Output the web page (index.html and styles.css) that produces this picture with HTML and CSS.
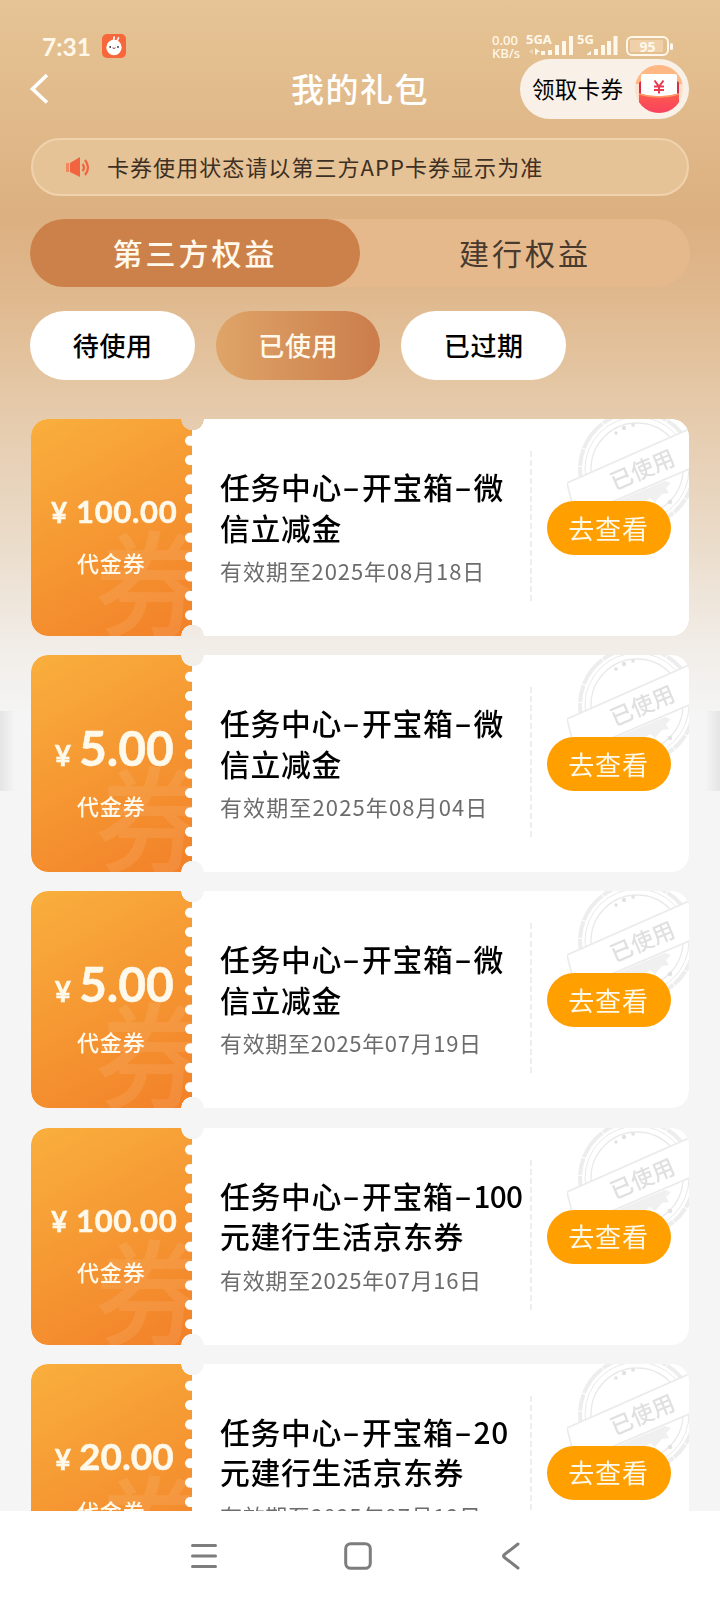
FILE: index.html
```html
<!DOCTYPE html>
<html lang="zh-CN">
<head>
<meta charset="utf-8">
<title>我的礼包</title>
<link rel="stylesheet" href="styles.css">
</head>
<body>
<svg class="defs" width="0" height="0" aria-hidden="true">
  <symbol id="stamp" viewBox="0 0 122 110">
    <g fill="none" stroke="#e9e9e9">
      <circle cx="70" cy="50" r="57" stroke-width="4" stroke-dasharray="31 1 17 1" opacity=".8"/>
      <circle cx="70" cy="50" r="52" stroke-width="1"/>
      <circle cx="70" cy="50" r="46" stroke-width="1.300"/>
    </g>
    <g fill="#e2e2e2"><circle cx="49" cy="14" r="1.800"/><circle cx="57" cy="9" r="2.200"/><circle cx="66" cy="6" r="1.800"/><circle cx="103" cy="83" r="2.200"/></g>
    <path d="M0 64L122 10v40L6 100z" fill="#fff"/>
    <path d="M0 64L122 10M40 85L122 50M0 64l6 24" fill="none" stroke="#ebebeb" stroke-width="1.700"/>
    <path d="M50 82L98 62l6 2-5 5 3 5-7 1-7 8-5-4-9 6-8-2-10 4z" fill="#f0f0f0"/>
  </symbol>
</svg>
<div class="screen">
  <header class="status">
    <span class="time">7:31</span>
    <svg class="app" width="26" height="26" viewBox="0 0 26 26"><rect x="1" y="1" width="24" height="24" rx="5" fill="#f8673b"/><path d="M12.500 7.500L13.200 4M16 8L17.500 4.800" stroke="#fff" stroke-width="1.700" stroke-linecap="round"/><circle cx="13" cy="14.500" r="7.700" fill="#fff"/><circle cx="9.200" cy="14" r=".9" fill="#333"/><circle cx="17" cy="14" r=".9" fill="#333"/><path d="M11.500 14.800q1.500 1.600 3 0" fill="#f55" stroke="#633" stroke-width=".7"/></svg>
    <span class="speed"><span>0.00</span><span>KB/s</span></span>
    <span class="net nga"><b>5GA</b>
      <svg width="48" height="24" viewBox="0 0 48 24"><path d="M5 15.500v6l-4-3z" opacity=".4"/><path d="M7 15l5 3.500-3 1v2H7zM13 18h4v4h-4zM20 17h4v5h-4zM27 12h4v10h-4zM34 8h4v14h-4zM41 3h4v19h-4z"/></svg></span>
    <span class="net ng"><b>5G</b>
      <svg width="48" height="24" viewBox="0 0 48 24"><path d="M10 21l4-3v4h-4zM17 16h4v6h-4zM24 12h4v10h-4zM30 8h4v14h-4zM36.500 3h4v19h-4z"/></svg></span>
    <span class="battery">95</span>
  </header>
  <div class="titlebar">
    <svg class="back" width="20" height="32" viewBox="0 0 20 32"><path d="M18 2L3.500 16 18 29.500" fill="none" stroke="#fff" stroke-width="3.600"/></svg>
    <h1>我的礼包</h1>
    <a class="claim"><span>领取卡券</span>
      <svg width="50" height="50" viewBox="0 0 50 50"><defs><clipPath id="c"><circle cx="25" cy="25" r="24"/></clipPath><linearGradient id="r" x2="0" y2="1"><stop stop-color="#fb5c4d"/><stop offset="1" stop-color="#fa3f60"/></linearGradient></defs><g clip-path="url(#c)"><rect width="50" height="50" fill="#ffe0cc"/><path d="M0 0h50v20H0z" fill="#ffb783"/><rect x="5" y="17" width="40" height="17" rx="3" fill="#d92e41"/><path d="M5 30q20 6 40 0v9q-4 11-20 11T5 39z" fill="url(#r)"/><path d="M9 10h32q2 0 2 2v18q-18 5-36 0V12q0-2 2-2z" fill="#fff"/><path d="M5 30q20 6 40 0" fill="none" stroke="#ff9a67" stroke-width="1.500"/><path d="M20.500 16.500l4.500 6 4.500-6M25 22v7.500M20 22.500h10M20 26h10" fill="none" stroke="#e93950" stroke-width="2"/></g></svg>
    </a>
  </div>
  <div class="notice">
    <svg width="26" height="24" viewBox="0 0 26 24"><path d="M0 8h3v9H0z" fill="#f7875b"/><path d="M4 8l10-6v20L4 17z" fill="#f26440"/><path d="M16.500 9q3 3.500 0 7M19 5q6 7.500 0 15" fill="none" stroke="#f26440" stroke-width="2.200"/></svg>
    <span>卡券使用状态请以第三方APP卡券显示为准</span>
  </div>
  <nav class="tabs"><a class="tab active"><span>第三方权益</span></a><a class="tab"><span>建行权益</span></a></nav>
  <nav class="filters"><a><span>待使用</span></a><a class="active"><span>已使用</span></a><a><span>已过期</span></a></nav>
  <main class="list">
    <article class="card">
      <div class="value"><p class="price hundred"><i>¥</i>100.00</p><p class="kind">代金券</p><span class="mark">券</span></div>
      <div class="info"><h2>任务中心<b>-</b>开宝箱<b>-</b>微<br>信立减金</h2><p>有效期至2025年08月18日</p></div>
      <div class="action"><svg class="stamp"><use href="#stamp"/></svg><span class="used">已使用</span><a>去查看</a></div>
    </article>
    <article class="card">
      <div class="value"><p class="price five"><i>¥</i>5.00</p><p class="kind">代金券</p><span class="mark">券</span></div>
      <div class="info"><h2>任务中心<b>-</b>开宝箱<b>-</b>微<br>信立减金</h2><p class="wide">有效期至2025年08月04日</p></div>
      <div class="action"><svg class="stamp"><use href="#stamp"/></svg><span class="used">已使用</span><a>去查看</a></div>
    </article>
    <article class="card">
      <div class="value"><p class="price five"><i>¥</i>5.00</p><p class="kind">代金券</p><span class="mark">券</span></div>
      <div class="info"><h2>任务中心<b>-</b>开宝箱<b>-</b>微<br>信立减金</h2><p class="narrow">有效期至2025年07月19日</p></div>
      <div class="action"><svg class="stamp"><use href="#stamp"/></svg><span class="used">已使用</span><a>去查看</a></div>
    </article>
    <article class="card">
      <div class="value"><p class="price hundred"><i>¥</i>100.00</p><p class="kind">代金券</p><span class="mark">券</span></div>
      <div class="info"><h2>任务中心<b>-</b>开宝箱<b>-</b><em>100</em><br>元建行生活京东券</h2><p class="narrow">有效期至2025年07月16日</p></div>
      <div class="action"><svg class="stamp"><use href="#stamp"/></svg><span class="used">已使用</span><a>去查看</a></div>
    </article>
    <article class="card">
      <div class="value"><p class="price twenty"><i>¥</i>20.00</p><p class="kind">代金券</p><span class="mark">券</span></div>
      <div class="info"><h2>任务中心<b>-</b>开宝箱<b>-</b>20<br>元建行生活京东券</h2><p class="narrow">有效期至2025年07月12日</p></div>
      <div class="action"><svg class="stamp"><use href="#stamp"/></svg><span class="used">已使用</span><a>去查看</a></div>
    </article>
  </main>
  <footer class="sysnav">
    <svg width="28" height="28" viewBox="0 0 28 28"><path d="M2.500 3.500h23M2.500 14h23M2.500 24.500h23"/></svg>
    <svg width="28" height="28" viewBox="0 0 28 28"><rect x="1.700" y="1.700" width="24.600" height="24.600" rx="5"/></svg>
    <svg width="28" height="28" viewBox="0 0 28 28"><path d="M20 2L6.500 12.500q-2 1.500 0 3L20 26"/></svg>
  </footer>
</div>
</body>
</html>
```
FILE: styles.css
```css
* { box-sizing: border-box; }
body { margin: 0; font-family: "Noto Sans CJK SC", sans-serif; color: #000; }
h1, h2, p { margin: 0; font-weight: 400; }
.defs { position: absolute; }
.screen {
  width: 720px; height: 1600px; overflow: hidden;
  display: flex; flex-direction: column;
  background:
    linear-gradient(90deg, #e5e5e5, #f5f5f500) 0 711px / 15px 80px no-repeat,
    linear-gradient(270deg, #e5e5e5, #f5f5f500) 705px 711px / 15px 80px no-repeat,
    linear-gradient(#e6c495 0, #dcb081 218px, #e0b98f 300px, #e5c9a8 400px, #eadac7 530px, #f1ece6 640px, #f5f5f5 715px);
}
.status { height: 59px; flex: none; display: flex; align-items: flex-start; padding: 33px 0 0 42px; color: #fff8ea; }
.time { font: 700 24.500px/27px Lato, sans-serif; width: 59px; flex: none; }
.app { flex: none; margin-right: 365px; }
.speed { display: flex; flex: none; flex-direction: column; width: 34px; font: 500 13px/13px "Noto Sans", sans-serif; padding-top: 1px; white-space: nowrap; }
.net { flex: none; display: flex; flex-direction: column; height: 26px; }
.net b { font: 700 13px/13px "Noto Sans", sans-serif; height: 13px; white-space: nowrap; }
.net svg { flex: none; margin-top: -13px; fill: #fff8ea; }
.nga { width: 51px; }
.nga svg { margin-left: 2px; }
.ng { width: 49px; }
.battery { flex: none; position: relative; width: 43px; height: 20px; margin-top: 3px; border: 2px solid #fff8ea; border-radius: 6px; background: linear-gradient(#efd0a9, #efd0a9) 2px 2px / 33px 12px no-repeat; font: 700 14px/17px "Noto Sans", sans-serif; text-align: center; }
.battery::after { content: ""; position: absolute; right: -6px; top: 5px; width: 3px; height: 7px; border-radius: 2px; background: #fff8ea; }
.titlebar { height: 60px; flex: none; display: grid; grid-template-columns: 200px 320px 200px; align-items: center; }
.back { margin-left: 29px; }
.titlebar h1 { text-align: center; font-weight: 500; font-size: 33px; line-height: 44px; letter-spacing: 1.500px; color: #fff; padding-bottom: 2px; }
.claim { justify-self: end; margin-right: 31px; width: 169px; height: 60px; border-radius: 30px; background: #f9f1e8; display: flex; align-items: center; justify-content: space-between; padding: 0 5px 0 12px; font-size: 22.500px; white-space: nowrap; letter-spacing: .3px; }
.claim span { padding-bottom: 2px; }
.notice { flex: none; margin: 19px 31px 0; height: 58px; border: 2px solid #f0d3ac; border-radius: 29px; background: #e6c297; display: flex; align-items: center; padding-left: 33px; font-size: 22px; letter-spacing: 1.050px; color: #3d3023; }
.notice svg { margin-right: 15px; }
.notice span { padding-bottom: 2px; }
.tabs { flex: none; margin: 23px 30px 0; height: 68px; border-radius: 34px; background: #e5b98c; display: flex; }
.tab { flex: 1; display: flex; align-items: center; justify-content: center; font-size: 30px; letter-spacing: 3px; color: #483a2c; border-radius: 34px; }
.tab span, .filters span { padding-bottom: 2px; }
.tab.active { background: #cd814a; color: #fff9ec; font-weight: 500; }
.filters { flex: none; margin: 24px 30px 0; display: flex; gap: 21px; }
.filters a { width: 164.500px; height: 69px; border-radius: 35px; background: #fff; display: flex; align-items: center; justify-content: center; font-size: 26px; font-weight: 500; letter-spacing: .6px; padding-left: 1px; }
.filters a.active { background: linear-gradient(90deg, #dfa468, #cb7d4b); color: #fff9ec; }
.list { flex: 1; min-height: 0; overflow: hidden; margin: 39px 31px 0 30.500px; display: flex; flex-direction: column; gap: 19.200px; }
.card {
  flex: none; height: 217px; width: 658.500px; display: flex; background: #fff; border-radius: 17px; overflow: hidden;
  -webkit-mask-image: radial-gradient(circle at 161.500px 0, #0000 11px, #000 11.500px), radial-gradient(circle at 161.500px 217px, #0000 11px, #000 11.500px);
  -webkit-mask-composite: source-in; mask-composite: intersect;
}
.value { position: relative; flex: none; width: 161.500px; overflow: hidden; background: linear-gradient(150deg, #f9af3d, #f28028); color: #fff9ec; text-align: center; }
.value::after {
  content: ""; position: absolute; left: 154px; top: 12px; width: 14px; height: 194px;
  background: radial-gradient(circle at 5px 9.700px, #fff 4.600px, #fff0 5.200px) 0 0 / 14px 19.400px, linear-gradient(#fff0 4.700px, #fff 4.700px 14.700px, #fff0 14.700px) 5px 0 / 9px 19.400px repeat-y;
}
.price { position: relative; z-index: 1; display: flex; align-items: baseline; justify-content: center; font-family: Lato, sans-serif; font-weight: 700; white-space: nowrap; }
.price { -webkit-text-stroke: .5px #fff9ec; }
.price i { font-style: normal; margin-right: 8px; font-size: 28px; }
.hundred { font-size: 31px; line-height: 40px; padding: 72px 0 0 6px; letter-spacing: .7px; }
.five { font-size: 48px; line-height: 60px; padding: 63px 0 0 6px; }
.twenty { font-size: 37px; line-height: 48px; padding: 68px 0 0 6px; }
.kind { position: relative; z-index: 1; font-size: 22px; line-height: 32px; letter-spacing: .8px; font-weight: 500; }
.hundred + .kind { margin-top: 14px; }
.five + .kind { margin-top: 4px; }
.twenty + .kind { margin-top: 11px; }
.mark { position: absolute; left: 64px; top: 89px; font-size: 115px; line-height: 140px; font-weight: 500; color: #fff; opacity: .085; }
.info { flex: none; width: 339px; padding: 47px 0 0 28px; white-space: nowrap; }
.info h2 { font-weight: 500; font-size: 29.800px; line-height: 40.500px; letter-spacing: .7px; }
.info h2 b { display: inline-block; width: 20px; text-align: center; font-weight: 500; transform: translate(-1px, -1px) scaleX(1.700); letter-spacing: 0; }
.info h2 em { font-style: normal; letter-spacing: -.7px; }
.info p { margin-top: 7px; font-size: 22px; line-height: 32px; letter-spacing: .9px; color: #6c6c6c; }
.info p.wide { letter-spacing: 1.120px; }
.info p.narrow { letter-spacing: .67px; }
.action { position: relative; width: 158px; padding: 82px 0 0 15.500px; }
.action::before { content: ""; position: absolute; left: -1px; top: 32px; width: 2px; height: 151px; background: repeating-linear-gradient(#ededed 0 6px, #fff 6px 9px); }
.stamp { position: absolute; right: 0; top: 0; width: 122px; height: 110px; }
.used { position: absolute; left: 77px; top: 32px; font-size: 22.500px; line-height: 34px; font-weight: 500; color: #e0e0e0; transform: rotate(-23deg); white-space: nowrap; }
.action a { position: relative; display: flex; align-items: center; justify-content: center; width: 124px; height: 54px; padding-bottom: 2px; border-radius: 27px; background: #ff9f00; color: #fff9ea; font-size: 26px; letter-spacing: .8px; }
.sysnav { flex: none; height: 89px; background: #fff; display: flex; justify-content: space-between; align-items: center; padding: 0 194px 0 190px; }
.sysnav svg { fill: none; stroke: #7d7d7d; stroke-width: 3; stroke-linecap: round; stroke-linejoin: round; }
```
